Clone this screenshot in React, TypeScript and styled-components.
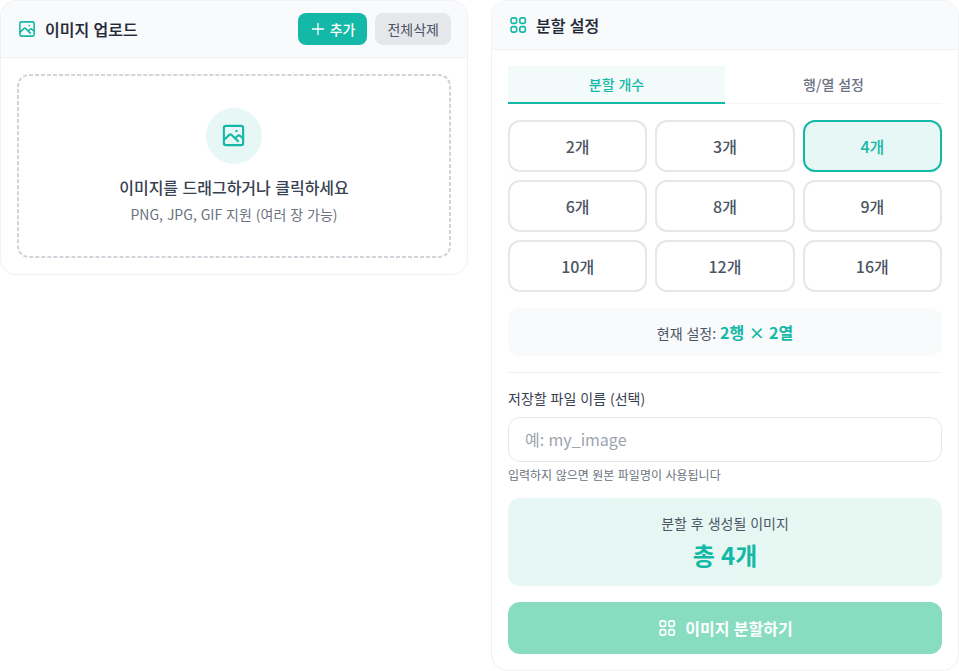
import React, { useState } from "react";
import styled, { createGlobalStyle } from "styled-components";

const Global = createGlobalStyle`
  *, *::before, *::after { box-sizing: border-box; }
  body { margin: 0; background: #fff; }
  body, button, input {
    font-family: "Noto Sans CJK KR", "Noto Sans", sans-serif;
    word-spacing: 0.05em;
  }
  button { border: 0; padding: 0; cursor: pointer; }
`;

const Page = styled.main`
  display: grid;
  grid-template-columns: 1fr 1fr;
  gap: 23px;
  align-items: start;
`;

const Card = styled.section`
  background: #fff;
  border: 1px solid #f0f1f4;
  border-radius: 16px;
  overflow: hidden;
`;

const CardHeader = styled.header`
  display: flex;
  align-items: center;
  justify-content: space-between;
  padding: 12px 16px;
  background: #f9fafb;
  border-bottom: 1px solid #f0f1f4;
`;

const Title = styled.h2`
  display: flex;
  align-items: center;
  gap: 8px;
  margin: 0;
  color: #1f2937;
  font-size: 16px;
  font-weight: 500;
  line-height: 24px;
  -webkit-text-stroke: 0.2px currentColor;
  svg { color: #14b8a6; }
`;

const Actions = styled.div`
  display: flex;
  gap: 8px;
`;

const SmallButton = styled.button<{ $primary?: boolean }>`
  display: flex;
  align-items: center;
  gap: 4px;
  height: 32px;
  padding: 0 12px;
  border-radius: 8px;
  background: ${(p) => (p.$primary ? "#14b8a6" : "#e5e7eb")};
  color: ${(p) => (p.$primary ? "#fff" : "#4b5563")};
  font-size: 14px;
  line-height: 20px;
  font-weight: ${(p) => (p.$primary ? 500 : 400)};
`;

const UploadBody = styled.div`
  padding: 16px;
`;

const DropZone = styled.div`
  position: relative;
  display: flex;
  flex-direction: column;
  align-items: center;
  padding: 34px;
  &::before {
    content: "";
    position: absolute;
    inset: 0 auto auto 0;
    width: 200%;
    height: 200%;
    border: 4px dashed #d1d5db;
    border-radius: 24px;
    transform: scale(0.5);
    transform-origin: 0 0;
    pointer-events: none;
  }
`;

const IconCircle = styled.div`
  display: flex;
  align-items: center;
  justify-content: center;
  width: 56px;
  height: 56px;
  margin-bottom: 11px;
  padding: 0 1px 1px 0;
  border-radius: 50%;
  background: #e6f7f5;
  color: #14b8a6;
`;

const DropTitle = styled.p`
  margin: 0 0 5px;
  color: #374151;
  font-size: 16px;
  line-height: 24px;
  font-weight: 500;
`;

const DropNote = styled.p`
  margin: 0;
  color: #6b7280;
  font-size: 14px;
  line-height: 20px;
`;

const SettingsBody = styled.div`
  display: flex;
  flex-direction: column;
  gap: 16px;
  padding: 16px;
`;

const Tabs = styled.div`
  display: grid;
  grid-template-columns: 1fr 1fr;
  border-bottom: 1px solid #f3f4f6;
`;

const Tab = styled.button<{ $active: boolean }>`
  height: 38px;
  margin-bottom: -1px;
  border-bottom: 2px solid ${(p) => (p.$active ? "#14b8a6" : "transparent")};
  background: ${(p) => (p.$active ? "#f3fbfa" : "transparent")};
  color: ${(p) => (p.$active ? "#14b8a6" : "#6b7280")};
  font-size: 14px;
  line-height: 20px;
  font-weight: 500;
`;

const Options = styled.div`
  display: grid;
  grid-template-columns: repeat(3, 1fr);
  gap: 8px;
`;

const Option = styled.button<{ $active: boolean }>`
  height: 52px;
  border: 2px solid ${(p) => (p.$active ? "#14b8a6" : "#e5e7eb")};
  border-radius: 12px;
  background: ${(p) => (p.$active ? "#e6f7f5" : "#fff")};
  color: ${(p) => (p.$active ? "#14b8a6" : "#4b5563")};
  font-size: 16px;
  line-height: 24px;
  font-weight: 500;
`;

const Current = styled.div`
  height: 48px;
  padding: 12px;
  border-radius: 12px;
  background: #f9fafb;
  color: #4b5563;
  font-size: 14px;
  line-height: 24px;
  text-align: center;
  strong {
    color: #14b8a6;
    font-size: 16px;
    font-weight: 700;
  }
`;

const FileName = styled.div`
  padding-top: 16px;
  border-top: 1px solid #f0f1f4;
`;

const Label = styled.label`
  display: block;
  margin-bottom: 9px;
  color: #374151;
  font-size: 14px;
  line-height: 19px;
`;

const Input = styled.input`
  display: block;
  width: 100%;
  height: 45px;
  padding: 0 16px 2px;
  border: 1px solid #e5e7eb;
  border-radius: 12px;
  background: #fff;
  color: #374151;
  font-size: 16px;
  outline: none;
  &::placeholder { color: #9ca3af; opacity: 1; }
`;

const Hint = styled.p`
  height: 15px;
  margin: 5px 0 0;
  color: #6b7280;
  font-size: 12px;
  line-height: 16px;
`;

const Summary = styled.div`
  padding: 15px 16px;
  border-radius: 12px;
  background: linear-gradient(90deg, #e6f7f5, #e7f7f1);
  text-align: center;
`;

const SummaryLabel = styled.p`
  margin: 0 0 6px;
  color: #4b5563;
  font-size: 14px;
  line-height: 20px;
`;

const Total = styled.p`
  margin: 0;
  color: #14b8a6;
  font-size: 24px;
  line-height: 32px;
  font-weight: 700;
`;

const Submit = styled.button`
  display: flex;
  align-items: center;
  justify-content: center;
  gap: 8px;
  height: 52px;
  border-radius: 12px;
  background: #88ddc0;
  color: #fff;
  font-size: 16px;
  line-height: 24px;
  font-weight: 700;
`;

const ImageIcon = ({ size }: { size: number }) => (
  <svg width={size} height={size} viewBox="-0.6 -0.6 25.2 25.2" fill="none" stroke="currentColor" strokeWidth="2" strokeLinejoin="round">
    <rect x="3" y="3" width="18" height="18" rx="2" />
    <path d="M3 16.2 8.3 11.2a1.2 1.2 0 0 1 1.7 0L16.8 17.8" />
    <path d="m13.4 14.6 2.4-2.1a1.9 1.9 0 0 1 2.6 0L21 14.8" />
    <circle cx="14.8" cy="7.7" r="1.1" fill="currentColor" stroke="none" />
  </svg>
);

const GridIcon = () => (
  <svg width="20" height="20" viewBox="-0.9 -0.6 25.2 25.2" fill="none" stroke="currentColor" strokeWidth="2">
    <rect x="3" y="3" width="7" height="7" rx="2.4" />
    <rect x="14" y="3" width="7" height="7" rx="2.4" />
    <rect x="3" y="14" width="7" height="7" rx="2.4" />
    <rect x="14" y="14" width="7" height="7" rx="2.4" />
  </svg>
);

const PlusIcon = () => (
  <svg width="15.5" height="16" viewBox="0 0 15.5 16" fill="none" stroke="currentColor" strokeWidth="1.3" strokeLinecap="round">
    <path d="M8 2.4v11.2M2.4 8h11.2" />
  </svg>
);

const counts = [2, 3, 4, 6, 8, 9, 10, 12, 16];
const layouts: Record<number, [number, number]> = {
  2: [1, 2], 3: [1, 3], 4: [2, 2], 6: [2, 3], 8: [2, 4], 9: [3, 3], 10: [2, 5], 12: [3, 4], 16: [4, 4],
};

export default function App() {
  const [count, setCount] = useState(4);
  const [tab, setTab] = useState(0);
  const [rows, cols] = layouts[count];
  return (
    <>
      <Global />
      <Page>
        <Card>
          <CardHeader>
            <Title><ImageIcon size={20} />이미지 업로드</Title>
            <Actions>
              <SmallButton $primary><PlusIcon />추가</SmallButton>
              <SmallButton>전체삭제</SmallButton>
            </Actions>
          </CardHeader>
          <UploadBody>
            <DropZone>
              <IconCircle><ImageIcon size={27} /></IconCircle>
              <DropTitle>이미지를 드래그하거나 클릭하세요</DropTitle>
              <DropNote>PNG, JPG, GIF 지원 (여러 장 가능)</DropNote>
            </DropZone>
          </UploadBody>
        </Card>
        <Card>
          <CardHeader>
            <Title><GridIcon />분할 설정</Title>
          </CardHeader>
          <SettingsBody>
            <Tabs>
              {["분할 개수", "행/열 설정"].map((name, i) => (
                <Tab key={name} $active={tab === i} onClick={() => setTab(i)}>{name}</Tab>
              ))}
            </Tabs>
            <Options>
              {counts.map((n) => (
                <Option key={n} $active={n === count} onClick={() => setCount(n)}>{`${n}개`}</Option>
              ))}
            </Options>
            <Current>현재 설정: <strong>{`${rows}행 × ${cols}열`}</strong></Current>
            <FileName>
              <Label htmlFor="file-name">저장할 파일 이름 (선택)</Label>
              <Input id="file-name" placeholder="예: my_image" />
              <Hint>입력하지 않으면 원본 파일명이 사용됩니다</Hint>
            </FileName>
            <Summary>
              <SummaryLabel>분할 후 생성될 이미지</SummaryLabel>
              <Total>{`총 ${count}개`}</Total>
            </Summary>
            <Submit><GridIcon />이미지 분할하기</Submit>
          </SettingsBody>
        </Card>
      </Page>
    </>
  );
}
